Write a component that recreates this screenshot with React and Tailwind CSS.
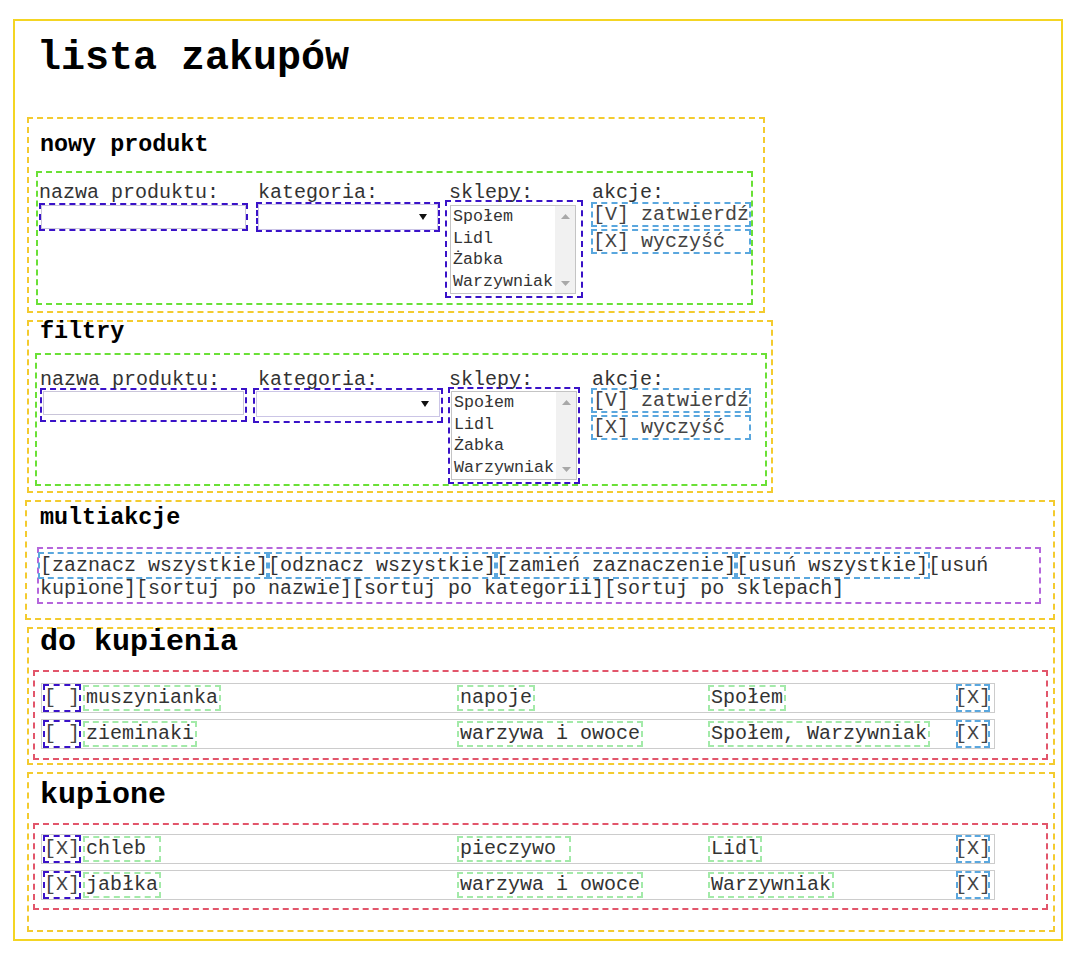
import React from "react";

function ArrowUp() {
  return (
    <svg width="9" height="5" viewBox="0 0 9 5">
      <path d="M0 5 L4.5 0 L9 5 Z" fill="#a8a8a8" />
    </svg>
  );
}

function ArrowDown() {
  return (
    <svg width="9" height="5" viewBox="0 0 9 5">
      <path d="M0 0 L9 0 L4.5 5 Z" fill="#a8a8a8" />
    </svg>
  );
}

function ListBox() {
  return (
    <div className="w-[126px] h-[89px] border border-[#c4c4c4] flex bg-white">
      <div className="flex-1 pl-[2px] text-[16.67px] leading-[21.5px] text-[#333] whitespace-nowrap">
        <div>Społem</div>
        <div>Lidl</div>
        <div>Żabka</div>
        <div>Warzywniak</div>
      </div>
      <div className="w-[20px] bg-[#f1f1f1] flex flex-col justify-between">
        <div className="h-[20px] flex items-center justify-center">
          <ArrowUp />
        </div>
        <div className="h-[20px] flex items-center justify-center">
          <ArrowDown />
        </div>
      </div>
    </div>
  );
}

function SelectBox() {
  return (
    <div className="h-full border border-[#cbc5e6] bg-white flex items-center justify-end pr-[10px]">
      <svg width="8" height="6" viewBox="0 0 8 6">
        <path d="M0 0 L8 0 L4 6 Z" fill="#111" />
      </svg>
    </div>
  );
}

function Buttons({ second }) {
  return (
    <div className={second ? "flex flex-col gap-[6px]" : "mt-[1px] flex flex-col gap-[6px]"}>
      <div className="w-[156px] h-[21px] leading-[21px] outline-2 outline-dashed outline-[#5aa7de] whitespace-nowrap text-[#444]">
        [V] zatwierdź
      </div>
      <div className="w-[156px] h-[21px] leading-[21px] outline-2 outline-dashed outline-[#5aa7de] whitespace-nowrap text-[#444]">
        [X] wyczyść
      </div>
    </div>
  );
}

function Form({ second }) {
  return (
    <div
      className={
        second
          ? "ml-[6px] mt-[9px] w-[732px] h-[133px] border-2 border-dashed border-[#6ae036] pt-[15px] flex items-start"
          : "ml-[7px] mt-[14px] w-[717px] h-[134px] border-2 border-dashed border-[#6ae036] pt-[10px] flex items-start"
      }
    >
      {/* nazwa produktu */}
      <div className={second ? "ml-[3px] w-[207px]" : "ml-[1px] w-[209px]"}>
        <div className="h-[20px] leading-[20px] whitespace-nowrap text-[#333]">nazwa produktu:</div>
        {second ? (
          <div className="-mt-[2px] h-[34px] border-2 border-dashed border-[#3a12c8] p-[1px]">
            <div className="h-[24px] border border-[#c9c5d9] bg-white"></div>
          </div>
        ) : (
          <div className="h-[28px] border-2 border-dashed border-[#3a12c8]">
            <div className="h-full border border-[#c9c5d9] bg-white"></div>
          </div>
        )}
      </div>

      {/* kategoria */}
      <div className={second ? "ml-[6px] w-[190px]" : "ml-[8px] w-[184px]"}>
        <div
          className={
            second
              ? "h-[20px] leading-[20px] whitespace-nowrap pl-[5px] text-[#333]"
              : "h-[20px] leading-[20px] whitespace-nowrap pl-[2px] text-[#333]"
          }
        >
          kategoria:
        </div>
        {second ? (
          <div className="-mt-[2px] h-[35px] border-2 border-dashed border-[#3a12c8] pt-[1px] px-[1px]">
            <div className="h-[26px]">
              <SelectBox />
            </div>
          </div>
        ) : (
          <div className="-mt-[1px] h-[30px] border-2 border-dashed border-[#3a12c8]">
            <SelectBox />
          </div>
        )}
      </div>

      {/* sklepy */}
      <div className={second ? "ml-[5px] w-[132px]" : "ml-[5px] w-[138px]"}>
        <div
          className={
            second
              ? "h-[20px] leading-[20px] whitespace-nowrap pl-[1px] text-[#333]"
              : "h-[20px] leading-[20px] whitespace-nowrap pl-[4px] text-[#333]"
          }
        >
          sklepy:
        </div>
        {second ? (
          <div className="-mt-[3px] h-[97px] border-2 border-dashed border-[#3a12c8] pl-[1px] pt-[2px]">
            <ListBox />
          </div>
        ) : (
          <div className="-mt-[3px] h-[98px] border-2 border-dashed border-[#3a12c8] pl-[3px] pt-[3px]">
            <ListBox />
          </div>
        )}
      </div>

      {/* akcje */}
      <div className={second ? "ml-[13px] w-[156px]" : "ml-[10px] w-[156px]"}>
        <div className="h-[20px] leading-[20px] whitespace-nowrap -ml-[1px] text-[#333]">akcje:</div>
        <Buttons second={second} />
      </div>
    </div>
  );
}

function Row({ check, name, cat, shops }) {
  return (
    <div className="w-[954px] h-[30px] border border-[#cccccc] flex items-center text-[#333]">
      <div className="ml-[3px] w-[34px] h-[24px] leading-[24px] outline-2 outline-dashed outline-[#3a12c8] flex justify-center whitespace-pre text-[#444]">
        {check}
      </div>
      <div className="ml-[6px] w-[374px] flex items-center">
        <span className="inline-block h-[22px] leading-[22px] px-[1px] outline-2 outline-dashed outline-[#a3eaa9] whitespace-pre">
          {name}
        </span>
      </div>
      <div className="w-[251px] flex items-center">
        <span className="inline-block h-[22px] leading-[22px] px-[1px] outline-2 outline-dashed outline-[#a3eaa9] whitespace-pre">
          {cat}
        </span>
      </div>
      <div className="w-[248px] flex items-center">
        <span className="inline-block h-[22px] leading-[22px] px-[1px] outline-2 outline-dashed outline-[#a3eaa9] whitespace-pre">
          {shops}
        </span>
      </div>
      <div className="w-[30px] h-[24px] leading-[24px] outline-2 outline-dashed outline-[#5aa7de] flex justify-center whitespace-pre text-[#444]">
        [X]
      </div>
    </div>
  );
}

export default function App() {
  return (
    <div className="min-h-[953px] bg-white pt-[19px] pl-[13px] font-['Liberation_Mono','Courier_New',monospace] text-[20px] text-[#222]">
      <div className="w-[1050px] h-[922px] border-2 border-solid border-[#f4d523] pl-[12px]">
        <h1 className="ml-[10px] mt-[18px] h-[40px] text-[40px] leading-[40px] font-bold text-black whitespace-nowrap">
          lista zakupów
        </h1>

        {/* nowy produkt */}
        <div className="mt-[38px] w-[738px] h-[196px] border-2 border-dashed border-[#f3cb2f]">
          <h3 className="ml-[11px] mt-[14px] h-[24px] text-[23.4px] leading-[24px] font-bold text-black whitespace-nowrap">
            nowy produkt
          </h3>
          <Form />
        </div>

        {/* filtry */}
        <div className="mt-[7px] w-[746px] h-[173px] border-2 border-dashed border-[#f3cb2f]">
          <h3 className="ml-[11px] -mt-[2px] h-[24px] text-[23.4px] leading-[24px] font-bold text-black whitespace-nowrap">
            filtry
          </h3>
          <Form second />
        </div>

        {/* multiakcje */}
        <div className="mt-[7px] -ml-[2px] w-[1030px] h-[120px] border-2 border-dashed border-[#f3cb2f]">
          <h3 className="ml-[13px] mt-[4px] h-[24px] text-[23.4px] leading-[24px] font-bold text-black whitespace-nowrap">
            multiakcje
          </h3>
          <div className="ml-[10px] mt-[17px] w-[1004px] h-[57px] border-2 border-dashed border-[#b566dc] pl-[1px] pt-[5px] leading-[23px] text-[#333]">
            <span className="outline-2 outline-dashed outline-[#5aa7de]">[zaznacz wszystkie]</span>
            <span className="outline-2 outline-dashed outline-[#5aa7de]">[odznacz wszystkie]</span>
            <span className="outline-2 outline-dashed outline-[#5aa7de]">[zamień zaznaczenie]</span>
            <span className="outline-2 outline-dashed outline-[#5aa7de]">[usuń wszystkie]</span>
            <span>[usuń kupione]</span>
            <span>[sortuj po nazwie]</span>
            <span>[sortuj po kategorii]</span>
            <span>[sortuj po sklepach]</span>
          </div>
        </div>

        {/* do kupienia */}
        <div className="mt-[7px] w-[1028px] h-[138px] border-2 border-dashed border-[#f3cb2f]">
          <h2 className="ml-[11px] -mt-[2px] h-[30px] text-[30px] leading-[30px] font-bold text-black whitespace-nowrap">
            do kupienia
          </h2>
          <div className="ml-[4px] mt-[13px] w-[1015px] h-[90px] border-2 border-dashed border-[#e2566b] pt-[11px] pl-[6px] flex flex-col gap-[6px]">
            <Row check="[ ]" name="muszynianka" cat="napoje" shops="Społem" />
            <Row check="[ ]" name="zieminaki" cat="warzywa i owoce" shops="Społem, Warzywniak" />
          </div>
        </div>

        {/* kupione */}
        <div className="mt-[7px] w-[1028px] h-[160px] border-2 border-dashed border-[#f3cb2f]">
          <h2 className="ml-[11px] mt-[6px] h-[30px] text-[30px] leading-[30px] font-bold text-black whitespace-nowrap">
            kupione
          </h2>
          <div className="ml-[4px] mt-[13px] w-[1015px] h-[87px] border-2 border-dashed border-[#e2566b] pt-[9px] pl-[6px] flex flex-col gap-[6px]">
            <Row check="[X]" name={"chleb\u00a0"} cat={"pieczywo\u00a0"} shops="Lidl" />
            <Row check="[X]" name="jabłka" cat="warzywa i owoce" shops="Warzywniak" />
          </div>
        </div>
      </div>
    </div>
  );
}
